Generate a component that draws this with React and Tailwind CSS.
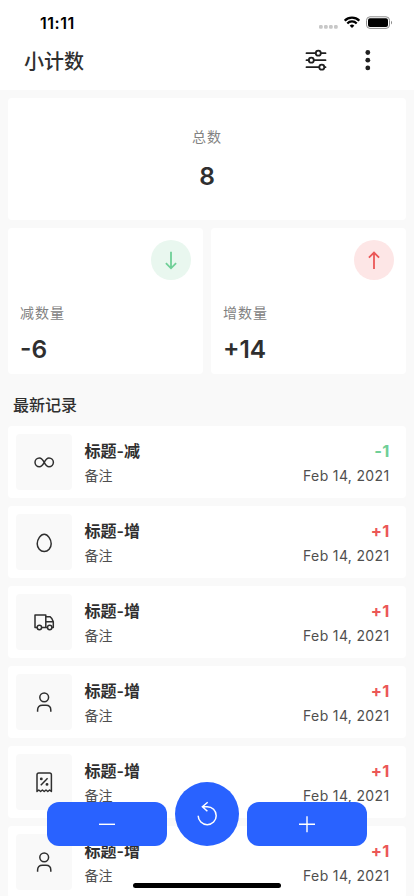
import React from 'react';

const records = [
  { id: 1, icon: 'infinity', title: '标题-减', note: '备注', change: -1, date: 'Feb 14, 2021' },
  { id: 2, icon: 'egg', title: '标题-增', note: '备注', change: 1, date: 'Feb 14, 2021' },
  { id: 3, icon: 'truck', title: '标题-增', note: '备注', change: 1, date: 'Feb 14, 2021' },
  { id: 4, icon: 'person', title: '标题-增', note: '备注', change: 1, date: 'Feb 14, 2021' },
  { id: 5, icon: 'receipt', title: '标题-增', note: '备注', change: 1, date: 'Feb 14, 2021' },
  { id: 6, icon: 'person', title: '标题-增', note: '备注', change: 1, date: 'Feb 14, 2021' },
];

const iconShapes = {
  infinity: (
    <path d="M12.200 12.300C10.800 9.600 9.400 7.900 7.400 7.900a4.400 4.400 0 0 0 0 8.800c2 0 3.400-1.700 4.800-4.400s2.800-4.400 4.800-4.400a4.400 4.400 0 0 1 0 8.800c-2 0-3.400-1.700-4.800-4.400z" />
  ),
  egg: <path d="M12.200 4.200c-3.600 0-7 5.200-7 9.600a7 7.700 0 0 0 14 0c0-4.400-3.400-9.600-7-9.600z" />,
  truck: (
    <>
      <path d="M5.200 17.500H3V5h10.800v12.500H9.600M13.800 6.700h4.200c1.600 1 2.600 3 3.300 5v5.800h-1.400M15.500 17.500h-1.700M13.800 11.700h7.500" />
      <circle cx="7.400" cy="17.500" r="2.200" />
      <circle cx="17.700" cy="17.500" r="2.200" />
    </>
  ),
  person: (
    <>
      <circle cx="12.200" cy="7.300" r="4.400" />
      <path d="M5.600 21.800V20c0-3.100 1.700-4.800 4.800-4.800H14c3.100 0 4.800 1.700 4.800 4.800v1.800" />
    </>
  ),
  receipt: (
    <>
      <path d="M5 21.500V4.800C5 3.500 5.500 3 6.800 3h10.800c1.300 0 1.800.5 1.800 1.800v16.700L17.600 20l-1.800 1.500L14 20l-1.800 1.500-1.800-1.500-1.800 1.500L6.800 20z" />
      <path d="m15.600 8.200-6.800 7" />
      <circle cx="9.300" cy="8.900" r=".7" />
      <circle cx="15" cy="14.400" r=".7" />
    </>
  ),
};

const RecordIcon = ({ name }) => (
  <svg
    className="h-6 w-6"
    viewBox="0 0 24 24"
    fill="none"
    stroke="currentColor"
    strokeWidth="1.500"
    strokeLinejoin="round"
  >
    {iconShapes[name]}
  </svg>
);

const StatusBar = () => (
  <div className="flex h-[45px] items-start justify-between pr-[21px] pl-10 text-black">
    <span className="mt-[12px] text-[16px] leading-[22px] font-semibold tracking-[0.500px]">11:11</span>
    <div className="mt-4 flex items-start">
      <svg className="mt-[9px] mr-[6px] h-1 w-[19px]" viewBox="0 0 19 4" fill="#c8c8c8">
        <rect x="0" width="3.700" height="3.700" rx="1.200" />
        <rect x="5" width="3.700" height="3.700" rx="1.200" />
        <rect x="10" width="3.700" height="3.700" rx="1.200" />
        <rect x="15" width="3.700" height="3.700" rx="1.200" />
      </svg>
      <svg className="mr-[6.500px] h-3 w-4" viewBox="0 0 16 12" fill="none" stroke="currentColor" strokeWidth="2.200">
        <path d="M.7 4.700a10.200 10.200 0 0 1 14.600 0" />
        <path d="M3.300 7.400a6.500 6.500 0 0 1 9.400 0" />
        <path d="M8 12 5.700 9.700a3.300 3.300 0 0 1 4.600 0z" fill="currentColor" stroke="none" />
      </svg>
      <svg className="h-[13px] w-[27px]" viewBox="0 0 27 13" fill="none">
        <rect x=".5" y=".8" width="23" height="11.600" rx="3.500" stroke="#8c8c8c" />
        <rect x="2" y="2.300" width="20" height="8.600" rx="2" fill="#000" />
        <path d="M25 4.800c1.400.6 1.400 3 0 3.700z" fill="#8c8c8c" />
      </svg>
    </div>
  </div>
);

const Header = () => (
  <header className="flex h-[45px] items-start justify-between pr-[41px] pl-6">
    <h1 className="mt-[2px] text-[20px] leading-[30px] font-medium">小计数</h1>
    <div className="flex items-center pt-1 text-[#202020]">
      <button aria-label="filter">
        <svg className="h-[22px] w-[22px]" viewBox="0 0 22 22" fill="none" stroke="currentColor" strokeWidth="1.800" strokeLinecap="round">
          <path d="M1.500 4.200h8.800M16.500 4.200h4M1.500 11.200h2.200M9.600 11.200h10.900M1.500 18.200H14" />
          <circle cx="13.300" cy="4.200" r="2.500" />
          <circle cx="6.300" cy="11.200" r="2.500" />
          <circle cx="16.800" cy="18.200" r="2.500" />
          <path d="M20 18.200h.5" />
        </svg>
      </button>
      <button aria-label="more" className="ml-[31px]">
        <svg className="h-[22px] w-[15px]" viewBox="0 0 15 22" fill="currentColor">
          <circle cx="9.800" cy="3.500" r="2.400" />
          <circle cx="9.800" cy="11.200" r="2.400" />
          <circle cx="9.800" cy="18.900" r="2.400" />
        </svg>
      </button>
    </div>
  </header>
);

const DownArrow = () => (
  <svg className="h-5 w-5" viewBox="0 0 20 20" fill="none" stroke="currentColor" strokeWidth="1.800">
    <path d="M10 1.700v16.600M4.900 13.200l5.100 5.100 5.100-5.100" />
  </svg>
);

const UpArrow = () => (
  <svg className="h-5 w-5" viewBox="0 0 20 20" fill="none" stroke="currentColor" strokeWidth="1.800">
    <path d="M10 19V2.700M4.900 7.700 10 2.600l5.100 5.100" />
  </svg>
);

const StatCard = ({ label, value, up }) => (
  <div className="h-[146px] rounded bg-white p-3">
    <div
      className={`ml-auto flex h-10 w-10 items-center justify-center rounded-full ${
        up ? 'bg-[#fde6e6] text-[#eb5757]' : 'bg-[#e9f7ef] text-[#6fcf97]'
      }`}
    >
      {up ? <UpArrow /> : <DownArrow />}
    </div>
    <p className="mt-[23px] text-[14px] leading-5 tracking-[1px] text-[#828282]">{label}</p>
    <p className="mt-[11px] text-[24.500px] leading-[30px] font-semibold">{value}</p>
  </div>
);

const RecordRow = ({ record }) => (
  <li className="flex h-[72px] rounded bg-white py-2 pr-4 pl-2">
    <div className="flex h-14 w-14 items-center justify-center rounded bg-[#f9f9f9]">
      <RecordIcon name={record.icon} />
    </div>
    <div className="ml-[12.500px] flex-1 pt-[5px]">
      <p className="text-[16px] leading-6 font-semibold">{record.title}</p>
      <p className="text-[14px] leading-[25px] text-[#4f4f4f]">{record.note}</p>
    </div>
    <div className="pt-[5px] pr-[0.500px] text-right">
      <p
        className={`text-[16.500px] leading-6 font-bold tracking-[0.200px] ${
          record.change > 0 ? 'text-[#eb5757]' : 'text-[#6fcf97]'
        }`}
      >
        {record.change > 0 ? `+${record.change}` : record.change}
      </p>
      <p className="text-[14px] leading-[25px] tracking-[0.350px] text-[#4f4f4f]">{record.date}</p>
    </div>
  </li>
);

const ActionBar = () => (
  <div className="fixed bottom-[50px] left-0 flex w-full items-end justify-center gap-2 text-white">
    <button aria-label="decrease" className="flex h-11 w-[120px] items-center justify-center rounded-xl bg-[#2962ff]">
      <svg className="h-6 w-6" viewBox="0 0 24 24" fill="none" stroke="currentColor" strokeWidth="1.400">
        <path d="M4 12.300h16" />
      </svg>
    </button>
    <button aria-label="reset" className="flex h-16 w-16 items-center justify-center rounded-full bg-[#2962ff]">
      <svg className="h-7 w-7" viewBox="0 0 28 28" fill="none" stroke="currentColor" strokeWidth="1.500">
        <path d="M5.200 15.700a9 9 0 1 0 9-9H9.400M14.700 2.200 9.400 6.700l5 4.500" />
      </svg>
    </button>
    <button aria-label="increase" className="flex h-11 w-[120px] items-center justify-center rounded-xl bg-[#2962ff]">
      <svg className="h-6 w-6" viewBox="0 0 24 24" fill="none" stroke="currentColor" strokeWidth="1.400">
        <path d="M4 12.300h16M12 4.300v16" />
      </svg>
    </button>
  </div>
);

const App = () => {
  return (
    <div className="h-screen overflow-hidden bg-[#f9f9f9] font-['Inter','Noto_Sans_CJK_SC',sans-serif] text-[#2f2f2f]">
      <div className="bg-white">
        <StatusBar />
        <Header />
      </div>

      <main className="px-2 pt-2">
        {/* Totals */}
        <section className="flex h-[122px] flex-col items-center rounded bg-white pt-[29px]">
          <p className="text-[14px] leading-5 tracking-[1px] text-[#828282]">总数</p>
          <p className="mt-[14px] text-[24.500px] leading-[30px] font-semibold">8</p>
        </section>
        <section className="mt-2 grid grid-cols-2 gap-2">
          <StatCard label="减数量" value="-6" />
          <StatCard label="增数量" value="+14" up />
        </section>

        {/* Latest records */}
        <h2 className="mt-[19px] ml-[5px] text-[16px] leading-6 font-medium">最新记录</h2>
        <ul className="mt-[9px] flex flex-col gap-2">
          {records.map((record) => (
            <RecordRow key={record.id} record={record} />
          ))}
        </ul>
      </main>

      <ActionBar />
      <div className="fixed bottom-2 left-[133px] h-[5px] w-[148px] rounded-full bg-black" />
    </div>
  );
};

export default App;
